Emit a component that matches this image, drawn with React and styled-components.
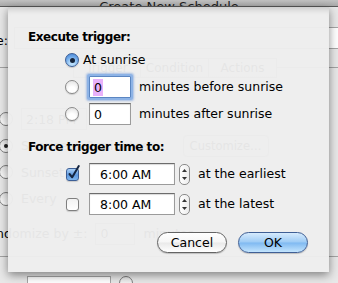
import React from "react";
import styled, { createGlobalStyle, css } from "styled-components";

const GlobalStyle = createGlobalStyle`
  html, body {
    margin: 0;
    padding: 0;
  }
  body {
    width: 338px;
    height: 283px;
    overflow: hidden;
    background: #e8e8e8;
    font-family: "DejaVu Sans", "Liberation Sans", sans-serif;
    -webkit-font-smoothing: antialiased;
  }
`;

/* ---------- window underneath the sheet ---------- */

const Window = styled.div`
  position: relative;
  width: 338px;
  height: 283px;
  overflow: hidden;
  background: #e8e8e8;
  font-size: 12.5px;
  color: #000;
`;

const TitleBar = styled.div`
  height: 6px;
  background: linear-gradient(#c2c2c2, #a9a9a9);
  border-bottom: 1px solid #595959;
  display: flex;
  justify-content: center;
  align-items: flex-end;
  overflow: hidden;
`;

const Title = styled.div`
  font-size: 13px;
  line-height: 13px;
  margin-bottom: -7px;
  color: #1e1e1e;
`;

const Content = styled.div`
  margin-left: -40px;
  margin-right: -12px;
`;

const NameRow = styled.div`
  margin-top: 20px;
  height: 22px;
  display: flex;
  align-items: center;
  gap: 6px;
`;

const NameLabel = styled.div`
  width: 48px;
  text-align: right;
  padding-top: 5px;
`;

const GhostField = styled.div`
  height: 22px;
  box-sizing: border-box;
  background: #fff;
  border: 1px solid #a5a5a5;
  padding: 0 4px;
  display: flex;
  align-items: center;
  ${({ grow }) => grow && css`flex: 1;`}
  ${({ w }) => w && css`width: ${w}px;`}
`;

const TabBox = styled.div`
  margin-top: 18px;
  border-top: 1px solid #a3a3a3;
  border-bottom: 1px solid #a3a3a3;
  padding: 0 0 11px 39px;
`;

const Tabs = styled.div`
  margin: -10px 0 0 74px;
  display: flex;
  height: 20px;
`;

const Tab = styled.div`
  width: 68px;
  height: 20px;
  box-sizing: border-box;
  border: 1px solid #9c9c9c;
  background: linear-gradient(#fdfdfd, #e6e6e6);
  display: flex;
  align-items: center;
  justify-content: center;
  font-size: 12px;
  & + & {
    border-left: none;
  }
`;

const GhostList = styled.div`
  margin-top: 30px;
  display: flex;
  flex-direction: column;
  gap: 4.5px;
`;

const GhostRow = styled.div`
  height: 22px;
  display: flex;
  align-items: center;
  gap: 8px;
`;

const GhostCircle = styled.div`
  width: 14px;
  height: 14px;
  box-sizing: border-box;
  border-radius: 50%;
  border: 1px solid #7e7e7e;
  background: linear-gradient(#e4e4e4, #fff);
  display: flex;
  align-items: center;
  justify-content: center;
  &::after {
    content: "";
    width: 4px;
    height: 4px;
    border-radius: 50%;
    background: ${({ on }) => (on ? "#222" : "transparent")};
  }
`;

const GhostButton = styled.div`
  margin-left: 26px;
  width: 84px;
  height: 20px;
  border: 1px solid #aaa;
  border-radius: 4px;
  display: flex;
  align-items: center;
  justify-content: center;
  font-size: 11.5px;
`;

const RandomRow = styled.div`
  margin: 13px 0 0 -19px;
  height: 22px;
  display: flex;
  align-items: center;
  gap: 8px;
`;

const BottomRow = styled.div`
  margin: 19px 0 0 67px;
  display: flex;
  align-items: flex-start;
  gap: 8px;
`;

/* ---------- the sheet ---------- */

const Sheet = styled.div`
  position: absolute;
  left: 8px;
  top: 7px;
  width: 321px;
  height: 265px;
  box-sizing: border-box;
  background: rgba(237, 237, 237, 0.965);
  box-shadow: 0 3px 9px rgba(0, 0, 0, 0.45),
    inset 0 7px 6px -5px rgba(0, 0, 0, 0.18);
  padding: 22px 21px 19px 20px;
  display: flex;
  flex-direction: column;
`;

const Heading = styled.div`
  font-weight: bold;
  font-size: 12px;
  letter-spacing: -0.45px;
  line-height: 16px;
  height: 16px;
  ${({ spaced }) => spaced && css`margin-top: 14px;`}
`;

const OptionList = styled.div`
  margin-top: 4px;
  display: flex;
  flex-direction: column;
  gap: ${({ gap }) => gap}px;
  ${({ top }) => top && css`margin-top: ${top}px;`}
`;

const Row = styled.div`
  height: 22px;
  display: flex;
  align-items: center;
  padding-left: ${({ indent }) => indent}px;
`;

const Radio = styled.div`
  width: 14px;
  height: 14px;
  box-sizing: border-box;
  border-radius: 50%;
  flex-shrink: 0;
  display: flex;
  align-items: center;
  justify-content: center;
  border: 1px solid #8a8a8a;
  background: radial-gradient(circle at 50% 75%, #ffffff 30%, #e9e9e9 75%),
    #f4f4f4;
  box-shadow: 0 1px 1px rgba(0, 0, 0, 0.15);
  ${({ checked }) =>
    checked &&
    css`
      border-color: #3d5f96;
      background: radial-gradient(circle at 50% 80%, #b6dcfb 20%, #6fa8e8 60%, #3f7fd4 100%);
      &::after {
        content: "";
        width: 5px;
        height: 5px;
        border-radius: 50%;
        background: #14233a;
      }
    `}
`;

const Label = styled.span`
  margin-left: ${({ gap }) => gap}px;
  white-space: nowrap;
  line-height: 16px;
`;

const TextField = styled.div`
  width: ${({ w }) => w}px;
  height: 22px;
  box-sizing: border-box;
  margin-left: 10px;
  flex-shrink: 0;
  background: #fff;
  border: 1px solid #9b9b9b;
  border-top-color: #6c6c6c;
  box-shadow: inset 0 1px 1px rgba(0, 0, 0, 0.15);
  padding-left: ${({ pad }) => pad}px;
  display: flex;
  align-items: center;
  ${({ focused }) =>
    focused &&
    css`
      border-color: #5b86c2;
      box-shadow: 0 0 0 2px #8db3e6, 0 0 2px 3px rgba(120, 160, 220, 0.6);
      border-radius: 1px;
    `}
`;

const Selected = styled.span`
  background: #e8b1fa;
  line-height: 17px;
  padding: 0 1px;
`;

const Checkbox = styled.div`
  position: relative;
  width: 13px;
  height: 13px;
  box-sizing: border-box;
  flex-shrink: 0;
  border-radius: 3px;
  border: 1px solid #7f7f7f;
  background: linear-gradient(#f2f2f2, #ffffff);
  box-shadow: 0 1px 1px rgba(0, 0, 0, 0.15);
  ${({ checked }) =>
    checked &&
    css`
      border-color: #3d5f96;
      background: linear-gradient(#a9d0f6, #5d98df 55%, #7fb6ee);
    `}
  svg {
    position: absolute;
    left: 1px;
    top: -4px;
    overflow: visible;
  }
`;

const Stepper = styled.div`
  margin-left: 4px;
  width: 11px;
  height: 21px;
  box-sizing: border-box;
  flex-shrink: 0;
  border: 1px solid #8c8c8c;
  border-radius: 5px;
  background: linear-gradient(90deg, #ffffff, #ececec);
  display: flex;
  flex-direction: column;
  justify-content: space-between;
  align-items: center;
  padding: 4px 0;
`;

const ButtonRow = styled.div`
  margin-top: auto;
  display: flex;
  justify-content: flex-end;
  gap: 11px;
`;

const Button = styled.button`
  width: 70px;
  height: 21px;
  padding: 0;
  border-radius: 11px;
  font-family: inherit;
  font-size: 12.5px;
  color: #000;
  border: 1px solid #646464;
  background: linear-gradient(#ffffff 0%, #f6f6f6 48%, #e9e9e9 52%, #ffffff 100%);
  box-shadow: 0 1px 1px rgba(0, 0, 0, 0.2);
  ${({ primary }) =>
    primary &&
    css`
      border-color: #3f5f95;
      background: linear-gradient(#d6ebfd 0%, #9dcbf5 48%, #7fb9f1 52%, #c3e4fd 100%);
    `}
`;

function Arrow({ up }) {
  return (
    <svg width="5" height="3" viewBox="0 0 5 3">
      <path d={up ? "M0 3 L2.5 0 L5 3 Z" : "M0 0 L2.5 3 L5 0 Z"} fill="#333" />
    </svg>
  );
}

function Check() {
  return (
    <svg width="12" height="14" viewBox="0 0 12 14">
      <path
        d="M1.5 9 L4.2 12.3 L10.8 1"
        fill="none"
        stroke="#142540"
        strokeWidth="2"
        strokeLinecap="round"
        strokeLinejoin="round"
      />
    </svg>
  );
}

export default function App() {
  return (
    <>
      <GlobalStyle />
      <Window>
        <TitleBar>
          <Title>Create New Schedule</Title>
        </TitleBar>
        <Content>
          <NameRow>
            <NameLabel>Name:</NameLabel>
            <GhostField grow />
          </NameRow>
          <TabBox>
            <Tabs>
              <Tab>Trigger</Tab>
              <Tab>Condition</Tab>
              <Tab>Actions</Tab>
            </Tabs>
            <GhostList>
              <GhostRow>
                <GhostCircle />
                <GhostField w={66}>2:18 PM</GhostField>
              </GhostRow>
              <GhostRow>
                <GhostCircle on />
                <span>Sunrise ± 0 minutes</span>
                <GhostButton>Customize…</GhostButton>
              </GhostRow>
              <GhostRow>
                <GhostCircle />
                <span>Sunset</span>
              </GhostRow>
              <GhostRow>
                <GhostCircle />
                <span>Every</span>
              </GhostRow>
            </GhostList>
            <RandomRow>
              <span>Randomize by ±:</span>
              <GhostField w={40}>0</GhostField>
              <span>minutes</span>
            </RandomRow>
          </TabBox>
          <BottomRow>
            <GhostField w={84} />
            <GhostCircle />
          </BottomRow>
        </Content>

        <Sheet>
          <Heading>Execute trigger:</Heading>
          <OptionList gap={5}>
            <Row indent={37}>
              <Radio checked />
              <Label gap={4}>At sunrise</Label>
            </Row>
            <Row indent={37}>
              <Radio />
              <TextField w={42} pad={3} focused>
                <Selected>0</Selected>
              </TextField>
              <Label gap={8}>minutes before sunrise</Label>
            </Row>
            <Row indent={37}>
              <Radio />
              <TextField w={42} pad={4}>
                0
              </TextField>
              <Label gap={8}>minutes after sunrise</Label>
            </Row>
          </OptionList>

          <Heading spaced>Force trigger time to:</Heading>
          <OptionList gap={8} top={8}>
            <Row indent={38}>
              <Checkbox checked>
                <Check />
              </Checkbox>
              <TextField w={86} pad={10}>
                6:00 AM
              </TextField>
              <Stepper>
                <Arrow up />
                <Arrow />
              </Stepper>
              <Label gap={8}>at the earliest</Label>
            </Row>
            <Row indent={38}>
              <Checkbox />
              <TextField w={86} pad={10}>
                8:00 AM
              </TextField>
              <Stepper>
                <Arrow up />
                <Arrow />
              </Stepper>
              <Label gap={8}>at the latest</Label>
            </Row>
          </OptionList>

          <ButtonRow>
            <Button>Cancel</Button>
            <Button primary>OK</Button>
          </ButtonRow>
        </Sheet>
      </Window>
    </>
  );
}
